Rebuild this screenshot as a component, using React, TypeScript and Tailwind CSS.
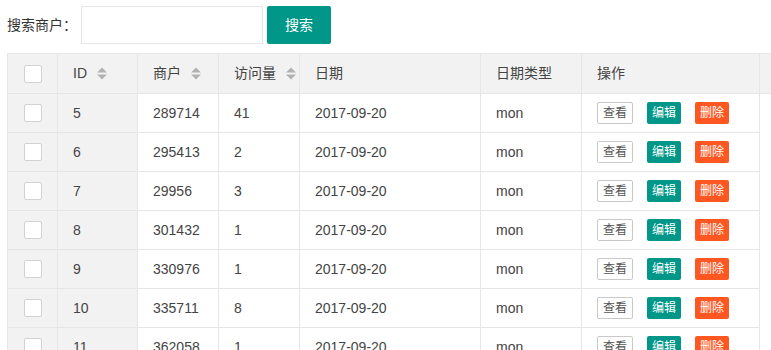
/* ── Merchant visit table – search bar + layui-style grid ── */

const rows = [
  { id: 5, shop: '289714', visits: 41 },
  { id: 6, shop: '295413', visits: 2 },
  { id: 7, shop: '29956', visits: 3 },
  { id: 8, shop: '301432', visits: 1 },
  { id: 9, shop: '330976', visits: 1 },
  { id: 10, shop: '335711', visits: 8 },
  { id: 11, shop: '362058', visits: 1 },
];

function SortIcon() {
  return (
    <svg width="10" height="13" viewBox="0 0 10 13" className="ml-[10px] shrink-0">
      <path d="M0 5.5 L5 0.5 L10 5.5 Z" fill="#b2b2b2" />
      <path d="M0 7.5 L5 12.5 L10 7.5 Z" fill="#b2b2b2" />
    </svg>
  );
}

function Checkbox() {
  return <div className="h-[18px] w-[18px] rounded-[2px] border border-[#d2d2d2] bg-white" />;
}

const cell =
  'flex items-center whitespace-nowrap border-r border-[#e6e6e6] pl-[15px] shrink-0';
const checkCell =
  'flex w-[50px] shrink-0 items-center justify-center border-r border-[#e6e6e6] bg-[#f2f2f2]';

export default function App() {
  return (
    <div
      className="h-[350px] w-[771px] overflow-hidden bg-white px-[7px] pt-[6px] text-[14px] text-[#444]"
      style={{ fontFamily: '"Liberation Sans", "Noto Sans CJK SC", sans-serif' }}
    >
      {/* Search row */}
      <div className="flex items-center">
        <span className="w-[74px] whitespace-nowrap text-[#333]">搜索商户：</span>
        <input className="h-[38px] w-[182px] border border-[#e6e6e6] bg-white px-2 outline-none" />
        <button className="ml-[4px] h-[38px] w-[64px] rounded-[2px] bg-[#009688] text-white">搜索</button>
      </div>

      {/* Table */}
      <div className="mt-[9px] w-[764px] border-l border-t border-[#e6e6e6]">
        <div className="flex h-[40px] border-b border-[#e6e6e6] bg-[#f2f2f2]">
          <div className={checkCell}>
            <Checkbox />
          </div>
          <div className={`${cell} w-[80px]`}>
            ID
            <SortIcon />
          </div>
          <div className={`${cell} w-[81px]`}>
            商户
            <SortIcon />
          </div>
          <div className={`${cell} w-[81px]`}>
            访问量
            <SortIcon />
          </div>
          <div className={`${cell} w-[181px]`}>日期</div>
          <div className={`${cell} w-[101px]`}>日期类型</div>
          <div className={`${cell} w-[178px]`}>操作</div>
          <div className="flex-1" />
        </div>

        {rows.map((r) => (
          <div key={r.id} className="flex h-[39px] w-[752px] border-b border-[#e6e6e6]">
            <div className={checkCell}>
              <Checkbox />
            </div>
            <div className={`${cell} w-[80px] bg-[#f2f2f2]`}>{r.id}</div>
            <div className={`${cell} w-[81px]`}>{r.shop}</div>
            <div className={`${cell} w-[81px]`}>{r.visits}</div>
            <div className={`${cell} w-[181px]`}>2017-09-20</div>
            <div className={`${cell} w-[101px]`}>mon</div>
            <div className={`${cell} w-[178px] gap-[14px]`}>
              <button className="h-[22px] rounded-[2px] border border-[#c9c9c9] bg-white px-[5px] text-[12px] leading-[20px] text-[#555]">
                查看
              </button>
              <button className="h-[22px] rounded-[2px] bg-[#009688] px-[5px] text-[12px] leading-[22px] text-white">
                编辑
              </button>
              <button className="h-[22px] rounded-[2px] bg-[#ff5722] px-[5px] text-[12px] leading-[22px] text-white">
                删除
              </button>
            </div>
          </div>
        ))}
      </div>
    </div>
  );
}
